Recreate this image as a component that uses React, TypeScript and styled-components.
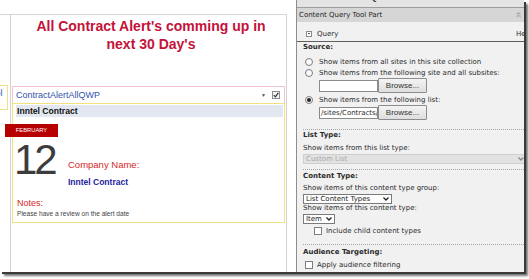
import React from 'react';
import styled, { createGlobalStyle } from 'styled-components';

const Global = createGlobalStyle`
  html, body { margin: 0; padding: 0; background: #fff; }
  body { width: 529px; height: 279px; overflow: hidden; font-family: "Liberation Sans", Arial, sans-serif; }
`;

const Frame = styled.div`
  width: 524px;
  height: 272px;
  display: flex;
  background: #fff;
  box-shadow: 2px 2px 0 #3a3a3a, 4px 4px 2px rgba(0,0,0,0.55);
  overflow: hidden;
`;

/* ---------- left page area ---------- */
const LeftArea = styled.div`
  width: 296px;
  flex: none;
  padding-top: 14px;
  box-sizing: border-box;
  display: flex;
  flex-direction: column;
`;

const ZoneRow = styled.div`
  width: 287px;
  flex: 1;
  display: flex;
  border-top: 1px solid #d6d6d6;
`;

const Stub = styled.div`
  width: 10px;
  flex: none;
  padding-top: 70px;
`;

const StubBox = styled.div`
  width: 8px;
  height: 25px;
  box-sizing: border-box;
  border: 1px solid #f3df86;
  border-left: none;
  overflow: hidden;
  font-size: 9px;
  color: #3550b0;
  line-height: 15px;
  text-indent: -14px;
  white-space: nowrap;
`;

const Zone = styled.div`
  width: 277px;
  box-sizing: border-box;
  border-left: 1px solid #d2d2d2;
  border-right: 1px solid #d2d2d2;
  display: flex;
  flex-direction: column;
`;

const Title = styled.h1`
  margin: 2px 0 0 5px;
  font-size: 14px;
  line-height: 18px;
  font-weight: bold;
  color: #c4123a;
  text-align: center;
`;

const WebPart = styled.div`
  margin: 33px 1px 0;
`;

const PartBar = styled.div`
  height: 17px;
  box-sizing: border-box;
  border: 1px solid #f2c4cf;
  border-bottom: none;
  display: flex;
  align-items: center;
  padding: 0 4px 0 3px;
  gap: 6px;
`;

const PartTitle = styled.span`
  flex: 1;
  font-size: 9px;
  color: #3452ad;
`;

const PartMenu = styled.span`
  font-size: 5px;
  color: #555;
`;

const PartCheck = styled.span`
  width: 8px;
  height: 8px;
  box-sizing: border-box;
  border: 1px solid #8c8c8c;
  background: #f4f4f4;
  display: flex;
  align-items: center;
  justify-content: center;
`;

const PartBody = styled.div`
  height: 120px;
  box-sizing: border-box;
  border: 1px solid #f4e27e;
  display: flex;
  flex-direction: column;
`;

const ItemHeader = styled.div`
  margin: 1px 1px 0 3px;
  height: 12px;
  background: #e3e7ef;
  font-size: 8.6px;
  font-weight: bold;
  line-height: 12px;
  color: #111;
  padding-left: 1px;
`;

const Month = styled.div`
  margin: 7px 0 0 -8px;
  width: 53px;
  height: 13px;
  background: #b70000;
  color: #fff;
  font-size: 5.8px;
  line-height: 13px;
  text-align: center;
`;

const DayRow = styled.div`
  display: flex;
  align-items: flex-start;
  margin-top: 2px;
`;

const Day = styled.div`
  width: 54px;
  flex: none;
  font-size: 42px;
  line-height: 42px;
  letter-spacing: -3px;
  color: #3c3c3c;
  padding-left: 1px;
`;

const Info = styled.div`
  display: flex;
  flex-direction: column;
  padding-top: 20px;
`;

const RedLabel = styled.div<{ $size: number }>`
  font-size: ${p => p.$size}px;
  color: #d9282a;
  line-height: 12px;
`;

const Company = styled.div`
  margin-top: 5px;
  font-size: 8.5px;
  font-weight: bold;
  color: #1d1da0;
  line-height: 12px;
`;

const Notes = styled.div`
  margin: 9px 0 0 4px;
`;

const NoteText = styled.div`
  font-size: 6.6px;
  color: #444;
  line-height: 9px;
`;

/* ---------- right tool pane ---------- */
const Panel = styled.div`
  flex: 1;
  border-left: 1px solid #8e8e8e;
  background: #f1f1f1;
  display: flex;
  flex-direction: column;
  overflow: hidden;
  font-family: "DejaVu Sans", Verdana, sans-serif;
  font-size: 7px;
  color: #2a2a2a;
`;

const TopStrip = styled.div`
  height: 7px;
  flex: none;
  background: #e4e4e4;
  border-bottom: 1px solid #9c9c9c;
  overflow: hidden;
  font-family: "Liberation Sans", Arial, sans-serif;
  font-weight: bold;
  font-size: 9px;
  line-height: 9px;
  color: #333;
  padding-left: 4px;
  & > span { display: block; margin-top: -7px; }
`;

const PaneHeader = styled.div`
  height: 14px;
  flex: none;
  background: #d6d6d6;
  display: flex;
  align-items: center;
  justify-content: space-between;
  padding: 0 3px 0 2px;
  color: #262626;
`;

const PaneBody = styled.div`
  padding-left: 6px;
  display: flex;
  flex-direction: column;
`;

const QueryRow = styled.div`
  height: 20px;
  margin-left: -6px;
  padding: 4px 0 0 9px;
  box-sizing: border-box;
  border-bottom: 1px solid #5e5e5e;
  display: flex;
  align-items: center;
  gap: 5px;
  white-space: nowrap;
`;

const Expander = styled.span`
  width: 6px;
  height: 6px;
  box-sizing: border-box;
  border: 1px solid #8a8a8a;
  background: #fff;
  position: relative;
  &::after {
    content: '';
    position: absolute;
    left: 1px;
    right: 1px;
    top: 1.5px;
    height: 1px;
    background: #555;
  }
`;

const Help = styled.span`
  margin-left: auto;
  margin-right: -8px;
`;

const Heading = styled.div<{ $top: number }>`
  margin-top: ${p => p.$top}px;
  font-weight: bold;
  line-height: 9px;
  height: 9px;
`;

const Line = styled.div<{ $top: number; $indent?: number }>`
  margin-top: ${p => p.$top}px;
  margin-left: ${p => p.$indent ?? 0}px;
  line-height: 9px;
  height: 9px;
  white-space: nowrap;
`;

const OptionRow = styled.div<{ $top: number; $indent?: number; $h?: number; $dim?: boolean }>`
  margin-top: ${p => p.$top}px;
  margin-left: ${p => p.$indent ?? 0}px;
  height: ${p => p.$h ?? 10}px;
  display: flex;
  align-items: center;
  gap: 4px;
  white-space: nowrap;
  opacity: ${p => (p.$dim ? 0.45 : 1)};
`;

const Radio = styled.span<{ $on?: boolean }>`
  width: 8px;
  height: 8px;
  flex: none;
  box-sizing: border-box;
  border-radius: 50%;
  border: 1px solid #7d7d7d;
  background: #fafafa;
  display: flex;
  align-items: center;
  justify-content: center;
  margin-right: 2px;
  &::after {
    content: '';
    width: 4px;
    height: 4px;
    border-radius: 50%;
    background: ${p => (p.$on ? '#222' : 'transparent')};
  }
`;

const Check = styled.span`
  width: 8px;
  height: 8px;
  flex: none;
  box-sizing: border-box;
  border: 1px solid #7d7d7d;
  background: #fff;
`;

const BrowseRow = styled.div<{ $top: number }>`
  margin-top: ${p => p.$top}px;
  margin-left: 16px;
  height: 15px;
  display: flex;
  align-items: center;
`;

const TextBox = styled.div`
  width: 59px;
  height: 12px;
  box-sizing: border-box;
  border: 1px solid #8a8a8a;
  background: #fff;
  font-size: 7px;
  line-height: 10px;
  padding-left: 1px;
  overflow: hidden;
  white-space: nowrap;
`;

const Button = styled.div`
  width: 49px;
  height: 15px;
  box-sizing: border-box;
  border: 1px solid #8c8c8c;
  border-radius: 1px;
  background: linear-gradient(#f4f4f4, #dedede);
  font-family: "Liberation Sans", Arial, sans-serif;
  font-size: 8px;
  line-height: 13px;
  text-align: center;
  color: #333;
`;

const Dotted = styled.div<{ $top: number }>`
  margin-top: ${p => p.$top}px;
  margin-right: -6px;
  border-top: 1px dotted #a4a4a4;
`;

const Select = styled.div<{ $w: number; $disabled?: boolean; $h?: number }>`
  margin-top: 1px;
  width: ${p => p.$w}px;
  height: ${p => p.$h ?? 11}px;
  box-sizing: border-box;
  border: 1px solid ${p => (p.$disabled ? '#cfcfcf' : '#7b7b7b')};
  background: ${p => (p.$disabled ? '#e2e2e2' : '#fff')};
  color: ${p => (p.$disabled ? '#a8a8a8' : '#222')};
  display: flex;
  align-items: center;
  justify-content: space-between;
  padding: 0 2px 0 2px;
  white-space: nowrap;
  line-height: 9px;
`;

const Chevron = ({ color = '#222' }: { color?: string }) => (
  <svg width="6" height="4" viewBox="0 0 6 4">
    <path d="M0.5 0.5 L3 3 L5.5 0.5" fill="none" stroke={color} strokeWidth="1.3" />
  </svg>
);

export default function App() {
  return (
    <>
      <Global />
      <Frame>
        <LeftArea>
          <ZoneRow>
            <Stub>
              <StubBox>Tool</StubBox>
            </Stub>
            <Zone>
              <Title>
                All Contract Alert's comming up in
                <br />
                next 30 Day's
              </Title>
              <WebPart>
                <PartBar>
                  <PartTitle>ContractAlertAllQWP</PartTitle>
                  <PartMenu>▼</PartMenu>
                  <PartCheck>
                    <svg width="6" height="6" viewBox="0 0 6 6">
                      <path d="M0.8 3.2 L2.4 4.8 L5.3 0.8" fill="none" stroke="#333" strokeWidth="1.2" />
                    </svg>
                  </PartCheck>
                </PartBar>
                <PartBody>
                  <ItemHeader>Inntel Contract</ItemHeader>
                  <Month>FEBRUARY</Month>
                  <DayRow>
                    <Day>12</Day>
                    <Info>
                      <RedLabel $size={9.5}>Company Name:</RedLabel>
                      <Company>Inntel Contract</Company>
                    </Info>
                  </DayRow>
                  <Notes>
                    <RedLabel $size={9}>Notes:</RedLabel>
                    <NoteText>Please have a review on the alert date</NoteText>
                  </Notes>
                </PartBody>
              </WebPart>
            </Zone>
          </ZoneRow>
        </LeftArea>

        <Panel>
          <TopStrip>
            <span>ContractAlertAllQWP</span>
          </TopStrip>
          <PaneHeader>
            <span>Content Query Tool Part</span>
            <svg width="5" height="6" viewBox="0 0 5 6">
              <path d="M0.5 2.5 L2.5 0.7 L4.5 2.5 M0.5 5 L2.5 3.2 L4.5 5" fill="none" stroke="#8a8a8a" strokeWidth="0.9" />
            </svg>
          </PaneHeader>
          <PaneBody>
            <QueryRow>
              <Expander />
              <span>Query</span>
              <Help>Help</Help>
            </QueryRow>
            <Heading $top={1}>Source:</Heading>
            <OptionRow $top={5} $indent={2} $h={10}>
              <Radio />
              <span>Show items from all sites in this site collection</span>
            </OptionRow>
            <OptionRow $top={1} $indent={2} $h={10}>
              <Radio />
              <span>Show items from the following site and all subsites:</span>
            </OptionRow>
            <BrowseRow $top={0}>
              <TextBox />
              <Button>Browse...</Button>
            </BrowseRow>
            <OptionRow $top={2} $indent={2} $h={10}>
              <Radio $on />
              <span>Show items from the following list:</span>
            </OptionRow>
            <BrowseRow $top={0}>
              <TextBox>/sites/Contracts/</TextBox>
              <Button>Browse...</Button>
            </BrowseRow>
            <Dotted $top={9} />
            <Heading $top={1}>List Type:</Heading>
            <Line $top={4}>Show items from this list type:</Line>
            <Select $w={224} $disabled $h={10}>
              <span>Custom List</span>
              <Chevron color="#888" />
            </Select>
            <Dotted $top={5} />
            <Heading $top={2}>Content Type:</Heading>
            <Line $top={3}>Show items of this content type group:</Line>
            <Select $w={89} $h={10}>
              <span>List Content Types</span>
              <Chevron />
            </Select>
            <Line $top={0}>Show items of this content type:</Line>
            <Select $w={32} $h={10}>
              <span>Item</span>
              <Chevron />
            </Select>
            <OptionRow $top={2} $indent={11} $h={10}>
              <Check />
              <span>Include child content types</span>
            </OptionRow>
            <Dotted $top={8} />
            <Heading $top={3}>Audience Targeting:</Heading>
            <OptionRow $top={3} $indent={2} $h={10}>
              <Check />
              <span>Apply audience filtering</span>
            </OptionRow>
            <OptionRow $top={2} $indent={2} $h={10} $dim>
              <Check />
              <span>Include items that are not targeted</span>
            </OptionRow>
          </PaneBody>
        </Panel>
      </Frame>
    </>
  );
}
